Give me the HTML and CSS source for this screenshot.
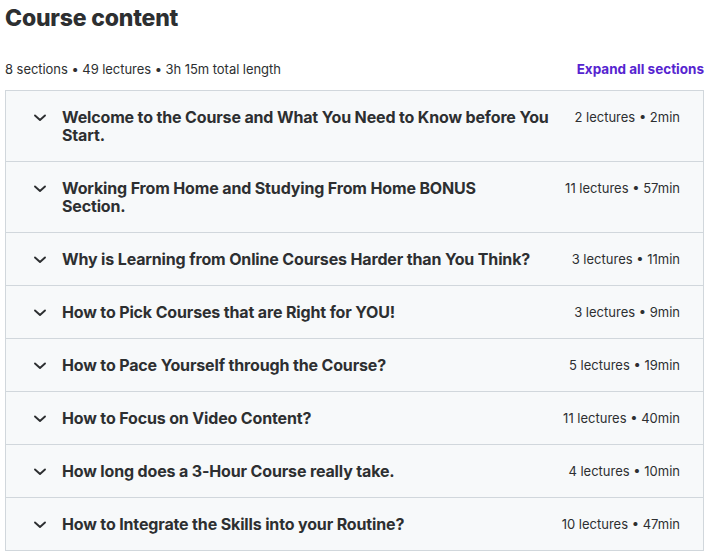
FILE: index.html
```html
<!DOCTYPE html>
<html>
<head>
<meta charset="utf-8">
<link rel="stylesheet" href="styles.css">
</head>
<body>
<div class="wrap">
  <h2 class="title">Course content</h2>
  <div class="summary">
    <span class="stats">8 sections • 49 lectures • 3h 15m total length</span>
    <button class="expand">Expand all sections</button>
  </div>
  <div class="sections">
    <div class="row"><span class="chev"><svg viewBox="0 0 16 16"><path d="M3 6.5l5 4.5 5-4.5"/></svg></span><span class="name">Welcome to the Course and What You Need to Know before You Start.</span><span class="meta">2 lectures • 2min</span></div>
    <div class="row"><span class="chev"><svg viewBox="0 0 16 16"><path d="M3 6.5l5 4.5 5-4.5"/></svg></span><span class="name">Working From Home and Studying From Home BONUS Section.</span><span class="meta">11 lectures • 57min</span></div>
    <div class="row"><span class="chev"><svg viewBox="0 0 16 16"><path d="M3 6.5l5 4.5 5-4.5"/></svg></span><span class="name">Why is Learning from Online Courses Harder than You Think?</span><span class="meta">3 lectures • 11min</span></div>
    <div class="row"><span class="chev"><svg viewBox="0 0 16 16"><path d="M3 6.5l5 4.5 5-4.5"/></svg></span><span class="name">How to Pick Courses that are Right for YOU!</span><span class="meta">3 lectures • 9min</span></div>
    <div class="row"><span class="chev"><svg viewBox="0 0 16 16"><path d="M3 6.5l5 4.5 5-4.5"/></svg></span><span class="name">How to Pace Yourself through the Course?</span><span class="meta">5 lectures • 19min</span></div>
    <div class="row"><span class="chev"><svg viewBox="0 0 16 16"><path d="M3 6.5l5 4.5 5-4.5"/></svg></span><span class="name">How to Focus on Video Content?</span><span class="meta">11 lectures • 40min</span></div>
    <div class="row"><span class="chev"><svg viewBox="0 0 16 16"><path d="M3 6.5l5 4.5 5-4.5"/></svg></span><span class="name">How long does a 3-Hour Course really take.</span><span class="meta">4 lectures • 10min</span></div>
    <div class="row"><span class="chev"><svg viewBox="0 0 16 16"><path d="M3 6.5l5 4.5 5-4.5"/></svg></span><span class="name">How to Integrate the Skills into your Routine?</span><span class="meta">10 lectures • 47min</span></div>
  </div>
</div>
</body>
</html>
```
FILE: styles.css
```css
html, body {
  margin: 0;
  padding: 0;
  background: #ffffff;
}
body {
  font-family: Inter, "Noto Sans", "Liberation Sans", sans-serif;
  color: #2d2f31;
}
.wrap {
  padding: 0 1px 0 5px;
}
.title {
  margin: 0;
  padding-top: 4px;
  font-size: 23px;
  font-weight: 800;
  line-height: 28px;
  letter-spacing: -0.2px;
}
.summary {
  display: flex;
  justify-content: space-between;
  align-items: center;
  margin-top: 27px;
  height: 20px;
  margin-bottom: 11px;
}
.stats {
  font-size: 13px;
  letter-spacing: -0.05px;
}
.expand {
  border: none;
  background: none;
  padding: 0;
  font-family: inherit;
  font-size: 13.5px;
  font-weight: 700;
  color: #5624d0;
}
.sections {
  border: 1px solid #d1d7dc;
  border-bottom: none;
}
.row {
  display: flex;
  align-items: flex-start;
  background: #f7f9fa;
  border-bottom: 1px solid #d1d7dc;
  padding: 17px 23px 17px 26px;
}
.chev {
  flex: none;
  width: 16px;
  height: 18px;
  margin-right: 14px;
  display: flex;
  align-items: center;
}
.chev svg {
  width: 16px;
  height: 16px;
  fill: none;
  stroke: #2d2f31;
  stroke-width: 1.9;
  stroke-linecap: round;
  stroke-linejoin: round;
}
.name {
  flex: 1;
  font-size: 16px;
  font-weight: 700;
  line-height: 18px;
  letter-spacing: -0.15px;
  margin-right: 24px;
}
.meta {
  flex: none;
  font-size: 13px;
  line-height: 18px;
}
```
